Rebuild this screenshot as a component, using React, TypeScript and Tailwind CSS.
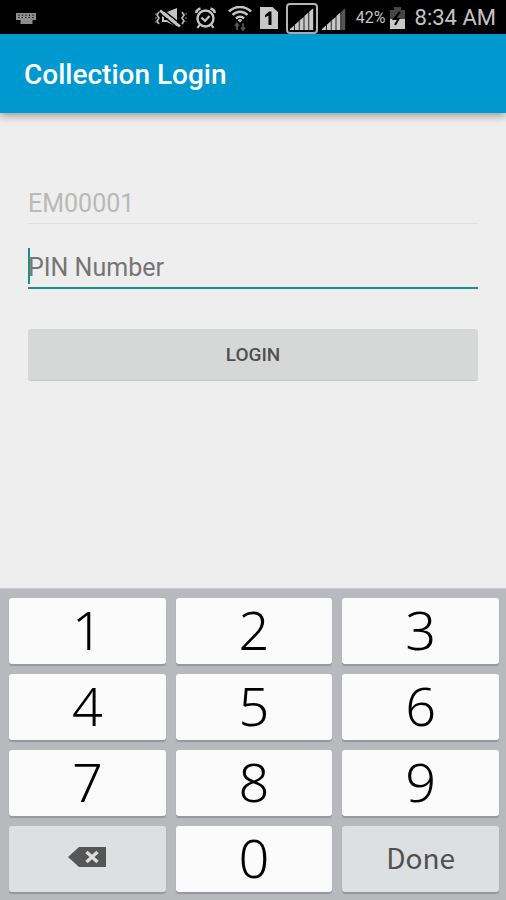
import { useState } from "react";

const SIGNAL_BARS = [0, 1, 2, 3, 4];

function KeyboardIcon() {
  return (
    <svg width="20" height="11" viewBox="0 0 20 11" aria-hidden="true">
      <path d="M0 0h20v7h-3.500v4h-12V7H0z" fill="#8d8d8d" />
      <path
        d="M3 1.500v1.500M6.500 1.500v1.500M10 1.500v1.500M13.500 1.500v1.500M17 1.500v1.500M2 4.500h1.500M5.500 4.500h1.500M9 4.500h1.500M12.500 4.500h1.500M16 4.500h1.500"
        stroke="#222"
        strokeWidth="1.200"
      />
    </svg>
  );
}

function VibrateMuteIcon() {
  return (
    <svg width="32" height="20" viewBox="0 0 32 20" fill="none" aria-hidden="true">
      <path d="M7 4h5l10-4v19l-10-5H7z" fill="#c4c4c4" />
      <path d="M9 8.500v3.500h3l2-1z" fill="#000" />
      <path d="M7 1l18 14.500M5 5.500l18 14.500" stroke="#000" strokeWidth="1.500" />
      <path d="M5 2.500l20 16" stroke="#c4c4c4" strokeWidth="2.800" />
      <path d="M4 4l-2 3 2 3-2 3 2 3M27 4l2 3-2 3 2 3-2 3" stroke="#b5b5b5" strokeWidth="1.700" />
      <path d="M1 5v10M31 5v9" stroke="#777" strokeWidth="1.200" strokeDasharray="2 2" />
    </svg>
  );
}

function AlarmIcon() {
  return (
    <svg width="21" height="22" viewBox="0 0 21 22" fill="none" stroke="#c4c4c4" aria-hidden="true">
      <circle cx="10.500" cy="11.500" r="8" strokeWidth="2.400" />
      <path d="M1 6a6 6 0 0 1 4.500-4.500M20 6a6 6 0 0 0-4.500-4.500" strokeWidth="2.400" />
      <path d="M6.500 10.500l3.500 3.500 4.500-5" strokeWidth="2.200" />
      <path d="M4.500 18l-2 3M16.500 18l2 3" strokeWidth="2.200" />
    </svg>
  );
}

function WifiIcon() {
  return (
    <svg width="24" height="25" viewBox="0 0 24 25" fill="none" aria-hidden="true">
      <path d="M1 5.500a15.500 15.500 0 0 1 22 0M4.500 9a10.500 10.500 0 0 1 15 0M8 12.500a5.700 5.700 0 0 1 8 0" stroke="#c4c4c4" strokeWidth="2.500" />
      <path d="M9.700 14.200a3.300 3.300 0 0 1 4.600 0L12 16.500z" fill="#c4c4c4" />
      <path d="M9 24v-6M7 20l2-2.500 2 2.500M15 17.500v6M13 21.500l2 2.500 2-2.500" stroke="#555" strokeWidth="1.800" />
    </svg>
  );
}

function SimIcon() {
  return (
    <svg width="18" height="22" viewBox="0 0 18 22" aria-hidden="true">
      <path d="M0 0h12.500L18 5v17H0z" fill="#c8c8c8" />
      <path d="M5 8l4-3.500h2.500V18H8.500V8.500L5 10.500z" fill="#000" />
    </svg>
  );
}

function SignalIcon({ level, className }: { level: number; className?: string }) {
  return (
    <svg width="24" height="23" viewBox="0 0 24 23" className={className} aria-hidden="true">
      {SIGNAL_BARS.map(i => (
        <path
          key={i}
          d={`M${i * 4.8} 23v${-(1 + i * 4.3)}l4-3.500V23z`}
          fill={i < level ? "#c8c8c8" : "#555"}
        />
      ))}
    </svg>
  );
}

function BatteryIcon() {
  return (
    <svg width="15" height="22" viewBox="0 0 15 22" aria-hidden="true">
      <path d="M4 0h7v3h4v9H0V3h4z" fill="#454545" />
      <path d="M0 12h15v10H0z" fill="#c8c8c8" />
      <path d="M10 5L4 12h4.500L5 18" fill="none" stroke="#000" strokeWidth="2" />
    </svg>
  );
}

function BackspaceIcon() {
  return (
    <svg width="38" height="20" viewBox="0 0 38 20" aria-hidden="true">
      <path d="M0 10L11 0h27v20H11z" fill="#565656" />
      <path d="M18.500 5l11 10M29.500 5l-11 10" stroke="#dedfe1" strokeWidth="3.200" />
    </svg>
  );
}

function StatusBar() {
  return (
    <div className="flex h-[34px] items-center bg-black pl-4 pr-2.5 pt-0.5 text-[#c4c4c4]">
      <KeyboardIcon />
      <div className="ml-auto flex items-center">
        <VibrateMuteIcon />
        <div className="ml-2"><AlarmIcon /></div>
        <div className="ml-3"><WifiIcon /></div>
        <div className="ml-2"><SimIcon /></div>
        <div className="ml-2 flex h-[31px] w-8 items-center justify-center rounded-sm border-2 border-[#b5b5b5]">
          <SignalIcon level={5} />
        </div>
        <SignalIcon level={4} className="ml-1" />
        <span className="ml-2.5 text-base leading-6">42%</span>
        <div className="ml-1"><BatteryIcon /></div>
        <span className="ml-2.5 text-[22px] leading-8">8:34 AM</span>
      </div>
    </div>
  );
}

export default function App() {
  const [pin, setPin] = useState("");

  return (
    <div className="flex min-h-screen flex-col bg-[#eeeeee] font-['Roboto',sans-serif]">
      <StatusBar />
      <header className="flex h-[79px] items-center bg-[#0099cf] px-6 pt-0.5 shadow-[0_3px_8px_rgba(0,0,0,0.35)]">
        <h1 className="text-[28px] font-medium leading-8 text-white">Collection Login</h1>
      </header>

      <form className="flex flex-1 flex-col px-7 pt-[70px]" onSubmit={e => e.preventDefault()}>
        <input
          aria-label="Employee ID"
          className="h-[41px] w-full border-b border-[#e0e0e0] text-[25px] text-[#b9b9b9]"
          value="EM00001"
          disabled
        />
        <div className="relative mt-6">
          <input
            aria-label="PIN Number"
            type="password"
            inputMode="numeric"
            className="h-[41px] w-full border-b-2 border-[#1b8f82] text-[25px] text-[#222] caret-[#1b8f82] outline-none placeholder:text-[#757575]"
            placeholder="PIN Number"
            value={pin}
            onChange={e => setPin(e.target.value)}
          />
          {pin === "" && <span className="absolute left-0 top-0 h-9 w-0.5 bg-[#1b8f82]" />}
        </div>
        <button
          type="submit"
          className="mt-10 h-[52px] w-full rounded-[3px] border-b border-[#c6c8c7] bg-[#d6d8d7] pt-0.5 text-[19px] font-medium text-[#505050]"
        >
          LOGIN
        </button>
      </form>

      {/* Numeric keypad */}
      <div className="grid grid-cols-3 gap-[10px] border-t border-[#c8cacd] bg-[#b7b9bd] pb-2 pl-[9px] pr-[7px] pt-[9px] font-['Noto_Sans',sans-serif]">
        {["1", "2", "3", "4", "5", "6", "7", "8", "9"].map(n => (
          <button
            key={n}
            type="button"
            onClick={() => setPin(pin + n)}
            className="h-[66px] rounded-[3px] bg-[#fbfbfb] pb-1 text-[54px] font-light leading-[62px] text-black shadow-[0_2px_1px_#95979a]"
          >
            {n}
          </button>
        ))}
        <button
          type="button"
          aria-label="Backspace"
          onClick={() => setPin(pin.slice(0, -1))}
          className="flex h-[66px] items-center justify-center rounded-[3px] bg-[#dedfe1] pb-1 shadow-[0_2px_1px_#95979a]"
        >
          <BackspaceIcon />
        </button>
        <button
          type="button"
          onClick={() => setPin(pin + "0")}
          className="h-[66px] rounded-[3px] bg-[#fbfbfb] pb-1 text-[54px] font-light leading-[62px] text-black shadow-[0_2px_1px_#95979a]"
        >
          0
        </button>
        <button
          type="button"
          className="h-[66px] rounded-[3px] bg-[#dedfe1] pb-1 font-['Noto_Sans_CJK_JP',sans-serif] text-[28px] font-normal leading-[62px] text-[#505050] shadow-[0_2px_1px_#95979a]"
        >
          Done
        </button>
      </div>
    </div>
  );
}
